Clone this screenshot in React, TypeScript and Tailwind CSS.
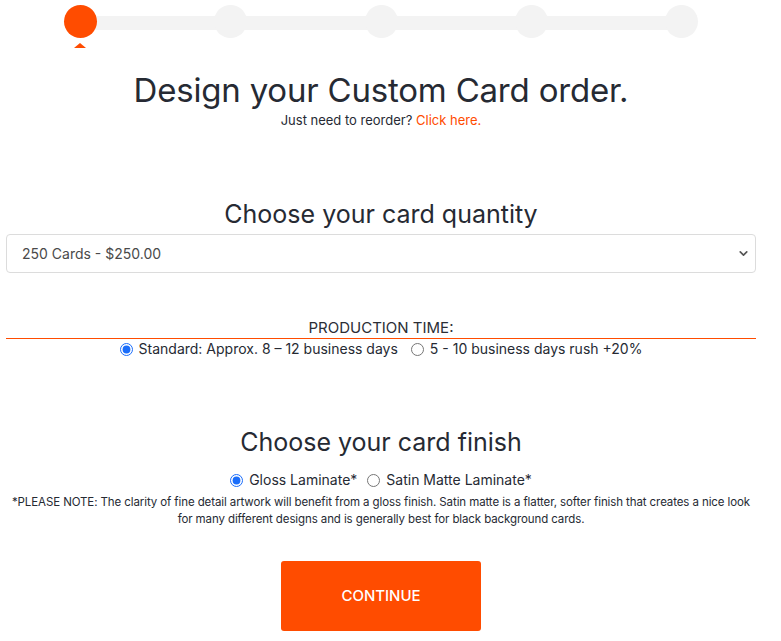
import { ChevronDown } from "lucide-react";

const steps = [0, 1, 2, 3, 4];

const Stepper = () => (
  <div className="relative mx-auto w-[634px] h-[50px]">
    <div className="absolute left-[16px] right-[16px] top-[16px] h-[14px] bg-[#f3f3f3]" />
    <div className="relative flex justify-between pt-[5px]">
      {steps.map((s) => (
        <div key={s} className="relative w-[33px] h-[33px]">
          <div
            className={
              s === 0
                ? "w-[33px] h-[33px] rounded-full bg-[#ff4c00]"
                : "w-[33px] h-[33px] rounded-full bg-[#f3f3f3]"
            }
          />
          {s === 0 && (
            <div className="absolute left-[10px] top-[38px] w-0 h-0 border-l-[6px] border-r-[6px] border-b-[5px] border-l-transparent border-r-transparent border-b-[#ff4c00]" />
          )}
        </div>
      ))}
    </div>
  </div>
);

export default function App() {
  return (
    <div className="min-h-[641px] bg-white text-[#262a33] font-['Inter',sans-serif]">
      <div className="w-[750px] ml-[6px]">
        <Stepper />

        <h1 className="mt-[20px] text-center text-[33px] leading-[40px] tracking-[-0.2px]">
          Design your Custom Card order.
        </h1>
        <p className="text-center text-[13px] leading-[18px] mt-[1px]">
          Just need to reorder?{" "}
          <a href="#" className="text-[#ff4c00]">
            Click here.
          </a>
        </p>

        <h2 className="mt-[70px] text-center text-[25px] leading-[30px]">
          Choose your card quantity
        </h2>
        <div className="relative mt-[5px] h-[39px] border border-[#dcdcdc] rounded-[4px] flex items-center pl-[15px]">
          <span className="text-[14px] text-[#4a4a4a]">250 Cards - $250.00</span>
          <ChevronDown className="absolute right-[5px] top-[12px] w-[13px] h-[13px] text-[#555]" strokeWidth={3} />
        </div>

        <div className="mt-[46px] text-center text-[15px] leading-[18px] text-[#2b2e36] border-b border-[#ff4c00] pb-px">
          PRODUCTION TIME:
        </div>
        <div className="flex justify-center items-center gap-[13px] mt-px text-[14px] leading-[18px]">
          <label className="flex items-center gap-[6px]">
            <input type="radio" name="prod" defaultChecked className="w-[13px] h-[13px] m-0 accent-[#1a6dfa]" />
            Standard: Approx. 8 – 12 business days
          </label>
          <label className="flex items-center gap-[6px]">
            <input type="radio" name="prod" className="w-[13px] h-[13px] m-0" />
            5 - 10 business days rush +20%
          </label>
        </div>

        <h2 className="mt-[69px] text-center text-[25px] leading-[30px]">
          Choose your card finish
        </h2>
        <div className="flex justify-center items-center gap-[10px] mt-[14px] text-[14px] leading-[18px]">
          <label className="flex items-center gap-[6px]">
            <input type="radio" name="finish" defaultChecked className="w-[13px] h-[13px] m-0 accent-[#1a6dfa]" />
            Gloss Laminate*
          </label>
          <label className="flex items-center gap-[6px]">
            <input type="radio" name="finish" className="w-[13px] h-[13px] m-0" />
            Satin Matte Laminate*
          </label>
        </div>
        <p className="mt-[5px] mx-auto w-[746px] text-center text-[11.5px] leading-[17px] tracking-[-0.1px]">
          *PLEASE NOTE: The clarity of fine detail artwork will benefit from a gloss finish. Satin matte is a flatter, softer finish that creates a nice look for many different designs and is generally best for black background cards.
        </p>

        <div className="flex justify-center mt-[33px]">
          <button className="w-[200px] h-[70px] bg-[#ff4c00] rounded-[3px] text-white text-[15px] font-medium">
            CONTINUE
          </button>
        </div>
      </div>
    </div>
  );
}
